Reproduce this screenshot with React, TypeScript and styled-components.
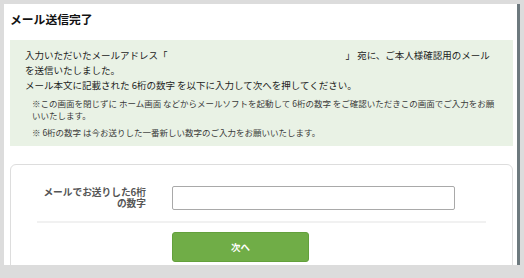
import React from "react";
import styled, { createGlobalStyle } from "styled-components";

const GlobalStyle = createGlobalStyle`
  html, body {
    margin: 0;
    padding: 0;
    background: #dcdcdc;
  }
  body {
    font-family: "Noto Sans CJK JP", "Noto Sans", sans-serif;
    color: #333;
  }
`;

const Frame = styled.div`
  margin: 4px 0 0 4px;
  height: 261px;
  width: 503px;
  padding: 0 4px 0 6px;
  background: #fff;
  border-right: 3px solid #6d797e;
  overflow: hidden;
`;

const Title = styled.h1`
  margin: 0;
  padding-top: 5px;
  height: 31px;
  font-size: 11.8px;
  line-height: 20px;
  font-weight: bold;
  color: #111;
`;

const InfoBox = styled.div`
  background: #e9f2e5;
  padding: 8px 14px 8px 15px;
`;

const Lead = styled.p`
  margin: 0;
  font-size: 9.5px;
  line-height: 15px;
  color: #222;
`;

const Blank = styled.span`
  display: inline-block;
  width: 178px;
`;

const Note = styled.p<{ $gap: number }>`
  margin: ${(p) => p.$gap}px 0 0 7px;
  font-size: 8.5px;
  line-height: 12px;
  color: #3a3a3a;
`;

const Card = styled.div`
  margin-top: 18px;
  border: 1px solid #dddddd;
  border-radius: 6px;
  padding: 21px 26px 20px 26px;
  height: 140px;
`;

const FormRow = styled.div`
  display: flex;
  align-items: center;
  gap: 26px;
  padding-bottom: 11px;
  border-bottom: 2px solid #f1f1f1;
`;

const Label = styled.label`
  width: 109px;
  flex-shrink: 0;
  text-align: right;
  font-size: 9.7px;
  line-height: 11px;
  font-weight: bold;
  color: #555;
`;

const CodeInput = styled.input`
  width: 283px;
  height: 24px;
  box-sizing: border-box;
  border: 1px solid #a9a9a9;
  border-radius: 2px;
  background: #fff;
  outline: none;
  padding: 0 6px;
`;

const Actions = styled.div`
  padding: 9px 0 0 135px;
`;

const NextButton = styled.button`
  width: 137px;
  height: 30px;
  background: #70ad47;
  border: 1px solid #63a03c;
  border-radius: 3px;
  color: #fff;
  font-family: inherit;
  font-size: 9.5px;
  font-weight: bold;
  cursor: pointer;
`;

const App = () => {
  return (
    <>
      <GlobalStyle />
      <Frame>
        <Title>メール送信完了</Title>
        <InfoBox>
          <Lead>
            入力いただいたメールアドレス「<Blank />」 宛に、ご本人様確認用のメール
            <br />
            を送信いたしました。
            <br />
            メール本文に記載された 6桁の数字 を以下に入力して次へを押してください。
          </Lead>
          <Note $gap={4}>
            ※この画面を閉じずに ホーム画面 などからメールソフトを起動して 6桁の数字
            をご確認いただきこの画面でご入力をお願いいたします。
          </Note>
          <Note $gap={5}>※ 6桁の数字 は今お送りした一番新しい数字のご入力をお願いいたします。</Note>
        </InfoBox>
        <Card>
          <FormRow>
            <Label htmlFor="code">メールでお送りした6桁の数字</Label>
            <CodeInput id="code" type="text" />
          </FormRow>
          <Actions>
            <NextButton type="button">次へ</NextButton>
          </Actions>
        </Card>
      </Frame>
    </>
  );
};

export default App;
